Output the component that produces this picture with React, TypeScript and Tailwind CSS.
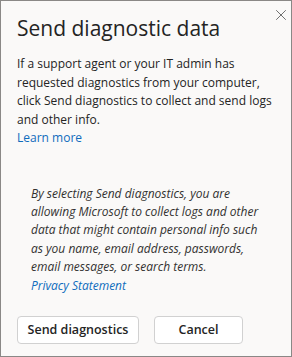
import { X } from "lucide-react"

export default function App() {
  return (
    <div className="relative h-[357px] w-[292px] border border-[#8a8886] bg-[#faf9f8] font-['Open_Sans',sans-serif] text-[#242424]">
      <button
        aria-label="Close"
        className="absolute right-0 top-[4px] flex size-[20px] items-center justify-center text-[#424242]"
      >
        <X className="size-[18px]" strokeWidth={1} />
      </button>
      <div className="pl-[16px] pr-[12px] pt-[12px]">
        <h1 className="text-[21px] leading-[30px] font-normal">Send diagnostic data</h1>
        <p className="mt-[12px] text-[12px] leading-[18.5px]">
          If a support agent or your IT admin has requested diagnostics from your computer, click Send diagnostics to
          collect and send logs and other info.
        </p>
        <a href="#" className="block text-[12px] leading-[18.5px] text-[#0f6cbd]">
          Learn more
        </a>
        <div className="mt-[37px] pl-[14px] pr-[14px] text-[12px] italic leading-[18.4px] text-[#323130]">
          <p>
            By selecting Send diagnostics, you are allowing Microsoft to collect logs and other data that might contain
            personal info such as you name, email address, passwords, email messages, or search terms.
          </p>
          <a href="#" className="block text-[#0f6cbd]">
            Privacy Statement
          </a>
        </div>
        <div className="mt-[21px] flex gap-[15px]">
          <button className="h-[28px] w-[122px] rounded-[4px] border border-[#d1d1d1] bg-white text-[12.5px] font-semibold">
            Send diagnostics
          </button>
          <button className="h-[28px] w-[89px] rounded-[4px] border border-[#d1d1d1] bg-white text-[12.5px] font-semibold">
            Cancel
          </button>
        </div>
      </div>
    </div>
  )
}
